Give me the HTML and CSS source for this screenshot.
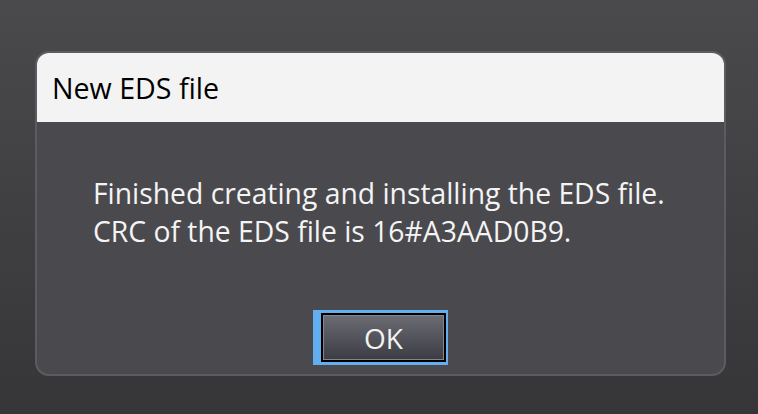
FILE: index.html
```html
<!DOCTYPE html>
<html lang="en">
<head>
    <meta charset="UTF-8">
    <meta name="viewport" content="width=device-width, initial-scale=1.0">
    <title>New EDS file</title>
    <link rel="stylesheet" href="styles.css">
</head>
<body>
    <div class="dialog">
        <div class="dialog-title">New EDS file</div>
        <div class="dialog-body">
            <p class="message">Finished creating and installing the EDS file.<br>CRC of the EDS file is 16#A3AAD0B9.</p>
            <div class="actions">
                <div class="focus-ring">
                    <button class="ok-button">OK</button>
                </div>
            </div>
        </div>
    </div>
</body>
</html>
```

FILE: styles.css
```css
html, body {
    height: 100%;
}

body {
    margin: 0;
    padding: 51px 0 0 35px;
    box-sizing: border-box;
    background: linear-gradient(to bottom, #4a4a4d, #363638);
    font-family: "Open Sans", "Noto Sans", sans-serif;
}

.dialog {
    width: 691px;
    height: 325px;
    box-sizing: border-box;
    border: 2px solid #5c5c60;
    border-radius: 14px;
    background-color: #4a494e;
    overflow: hidden;
    display: flex;
    flex-direction: column;
}

.dialog-title {
    height: 69px;
    flex-shrink: 0;
    background-color: #f3f3f3;
    color: #000;
    font-size: 28.6px;
    padding-left: 15px;
    display: flex;
    align-items: center;
}

.dialog-body {
    flex: 1;
    display: flex;
    flex-direction: column;
}

.message {
    margin: 52px 0 0 56px;
    color: #f4f4f4;
    font-size: 28.3px;
    line-height: 38px;
}

.actions {
    display: flex;
    justify-content: center;
    margin-top: auto;
    margin-bottom: 9px;
}

.focus-ring {
    background-color: #62aeef;
    padding: 3px 2px 3px 8px;
}

.ok-button {
    display: block;
    width: 125px;
    height: 49px;
    border: 2px solid #000;
    box-shadow: inset 0 0 0 1px #85858c;
    background: linear-gradient(to bottom, #6c6c74, #3b3c43);
    color: #f2f2f2;
    font-family: inherit;
    font-size: 28px;
    padding: 0;
}
```
